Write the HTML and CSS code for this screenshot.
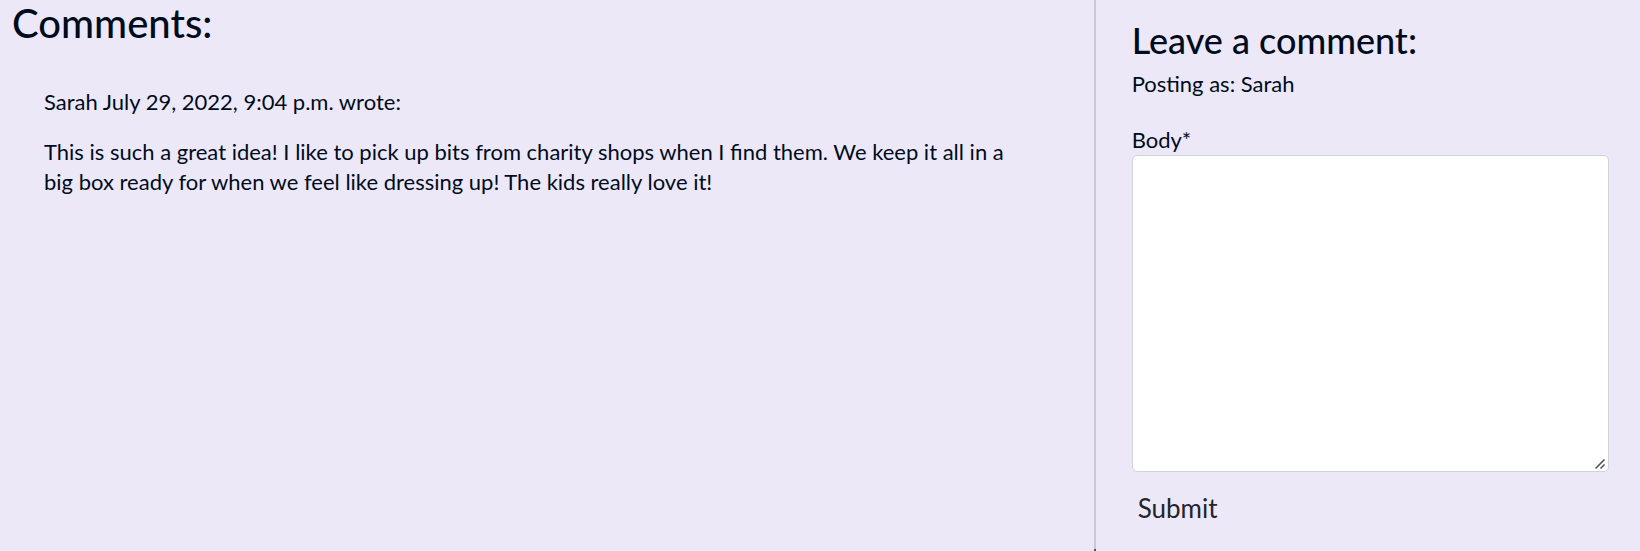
FILE: index.html
```html
<!DOCTYPE html>
<html lang="en">
<head>
<meta charset="utf-8">
<title>Comments</title>
<link rel="stylesheet" href="styles.css">
</head>
<body>
<main class="layout">
  <section class="comments">
    <h2 class="comments-title">Comments:</h2>
    <article class="comment">
      <p class="comment-meta">Sarah July 29, 2022, 9:04 p.m. wrote:</p>
      <p class="comment-text">This is such a great idea! I like to pick up bits from charity shops when I find them. We keep it all in a big box ready for when we feel like dressing up! The kids really love it!</p>
    </article>
  </section>
  <section class="reply">
    <h3 class="reply-title">Leave a comment:</h3>
    <p class="reply-user">Posting as: Sarah</p>
    <form class="reply-form">
      <label class="reply-label" for="body">Body*</label>
      <textarea class="reply-body" id="body" name="body" rows="10" required></textarea>
      <button class="reply-submit" type="submit">Submit</button>
    </form>
  </section>
</main>
</body>
</html>
```
FILE: styles.css
```css
* {
  box-sizing: border-box;
}

body {
  margin: 0;
  background: #ede8f8;
  color: #000c1c;
  font-family: Lato, sans-serif;
  font-size: 22px;
  line-height: 30px;
}

h2,
h3,
p {
  margin: 0;
  font-weight: 500;
}

p {
  font-weight: 400;
}

.layout {
  display: grid;
  grid-template-columns: 2fr 1fr;
  column-gap: 1px;
  min-height: 100vh;
}

.comments {
  padding: 0 12px;
}

.comments-title {
  font-size: 40px;
  line-height: 46px;
}

.comment {
  padding: 41px 60px 40px 32px;
}

.comment-meta {
  margin-bottom: 20px;
}

.reply {
  position: relative;
  padding: 19px 31px 12px 36px;
  border-left: 2px solid #cbc7d6;
}

/* Dark cap at the foot of the divider */
.reply::before {
  content: "";
  position: absolute;
  bottom: 0;
  left: -2px;
  width: 2px;
  height: 2px;
  background: #4a5260;
}

.reply-title {
  font-size: 36px;
  line-height: 42px;
}

.reply-user {
  margin: 8px 0 26px;
}

.reply-form {
  display: flex;
  flex-direction: column;
  align-items: flex-start;
}

.reply-body {
  width: 100%;
  height: 317px;
  padding: 6px 12px;
  border: 1px solid #ced4da;
  border-radius: 5px;
  background: #fff;
  font: inherit;
  resize: vertical;
}

.reply-body::-webkit-resizer {
  background: url("data:image/svg+xml,%3Csvg xmlns='http://www.w3.org/2000/svg' width='15' height='15' viewBox='0 0 15 15'%3E%3Cpath d='M2.5 12.5l9-9M7.5 12.5l4-4' stroke='%23555' stroke-width='1.6'/%3E%3C/svg%3E") no-repeat right bottom;
}

.reply-submit {
  margin-top: 16px;
  padding: 1px 6px;
  border: 0;
  background: transparent;
  color: #212529;
  font: inherit;
  font-size: 26px;
  line-height: 38px;
}
```
